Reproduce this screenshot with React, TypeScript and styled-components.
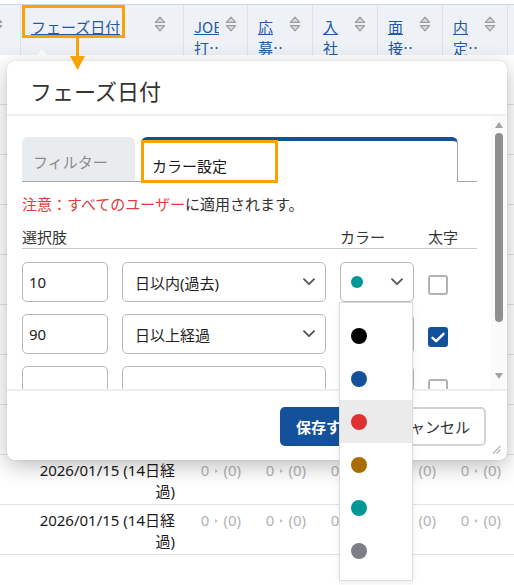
import React from 'react';
import styled, { createGlobalStyle } from 'styled-components';

const GlobalStyle = createGlobalStyle`
  html, body {
    margin: 0;
    padding: 0;
    background: #fff;
  }
  body {
    font-family: "Noto Sans", "Noto Sans CJK JP", sans-serif;
    color: #222;
    overflow: hidden;
  }
  * {
    box-sizing: border-box;
  }
`;

const COLS = '21px 163px 64px 65px 65px 65px 65px 1fr';
const BLUE = '#13529a';
const ORANGE = '#f8a300';

const Page = styled.div`
  position: relative;
  width: 514px;
  height: 585px;
  overflow: hidden;
  padding-top: 4px;
`;

const Table = styled.div`
  border-top: 1px solid #d3d6da;
`;

const HeadRow = styled.div`
  display: grid;
  grid-template-columns: ${COLS};
  height: 50px;
  background: #eef1f5;
`;

const HeadCell = styled.div<{ $wide?: boolean; $edge?: boolean }>`
  display: flex;
  align-items: flex-start;
  justify-content: ${p => (p.$edge ? 'flex-end' : p.$wide ? 'space-between' : 'flex-start')};
  gap: 6px;
  padding: 11px ${p => (p.$edge || p.$wide ? '17px' : '0')} 0 ${p => (p.$edge ? '0' : '10px')};
  border-right: 1px solid #dde1e6;
  overflow: hidden;
`;

const HeadLabel = styled.span<{ $w?: number }>`
  display: -webkit-box;
  -webkit-box-orient: vertical;
  -webkit-line-clamp: 2;
  overflow: hidden;
  flex: none;
  width: ${p => (p.$w ? `${p.$w}px` : 'auto')};
  font-family: "Noto Sans CJK JP", sans-serif;
  font-size: 15px;
  line-height: 21px;
  color: #1f5aa6;
  text-decoration: underline;
`;

const BodyRow = styled.div`
  display: grid;
  grid-template-columns: ${COLS};
  height: 50px;
  border-bottom: 1px solid #e2e2e2;
  font-size: 15px;
  line-height: 21px;
`;

const DateCell = styled.div`
  grid-column: 2;
  text-align: right;
  padding: 5px 9px 0 12px;
  color: #1a1a1a;
`;

const CountCell = styled.div`
  text-align: right;
  padding: 5px 7px 0 0;
  color: #b3b3b3;
  white-space: nowrap;
`;

const Pointer = styled.span`
  display: inline-block;
  width: 0;
  height: 0;
  margin: 0 5px 2px 6px;
  border-left: 3px solid #c4c4c4;
  border-top: 2.5px solid transparent;
  border-bottom: 2.5px solid transparent;
  vertical-align: middle;
`;

/* annotations laid over the page */
const HighlightBox = styled.div<{ $left: number; $top: number; $w: number; $h: number }>`
  position: absolute;
  left: ${p => p.$left}px;
  top: ${p => p.$top}px;
  width: ${p => p.$w}px;
  height: ${p => p.$h}px;
  border: 3px solid ${ORANGE};
  pointer-events: none;
  z-index: 5;
`;

const ArrowMark = styled.svg`
  position: absolute;
  left: 69px;
  top: 38px;
  z-index: 5;
`;

const Caret = styled.div`
  position: absolute;
  left: 37px;
  top: 49px;
  width: 0;
  height: 0;
  border-left: 5px solid transparent;
  border-right: 5px solid transparent;
  border-bottom: 6px solid #fff;
  z-index: 3;
`;

/* dialog */
const Dialog = styled.div`
  position: absolute;
  left: 7px;
  top: 61px;
  width: 500px;
  height: 399px;
  background: #fff;
  border-radius: 8px;
  box-shadow: 0 6px 22px rgba(0, 0, 0, 0.26), 0 0 2px rgba(0, 0, 0, 0.12);
  display: flex;
  flex-direction: column;
  z-index: 4;
`;

const DialogTitle = styled.div`
  padding: 14px 23px 9px;
  font-family: "Noto Sans CJK JP", sans-serif;
  font-size: 22px;
  line-height: 30px;
  color: #333;
  border-bottom: 2px solid #eeeeee;
`;

const DialogBody = styled.div`
  display: flex;
  height: 273px;
  flex: none;
`;

const Content = styled.div`
  flex: 1;
  padding: 21px 14px 0 15px;
  overflow: hidden;
  font-size: 15px;
`;

const ScrollTrack = styled.div`
  width: 16px;
  display: flex;
  flex-direction: column;
  align-items: center;
  padding: 6px 0 10px;
  background: #fafafa;
`;

const ScrollArrow = styled.div<{ $down?: boolean }>`
  width: 0;
  height: 0;
  border-left: 4.5px solid transparent;
  border-right: 4.5px solid transparent;
  ${p => (p.$down ? 'border-top: 6px solid #a3a3a3;' : 'border-bottom: 6px solid #a3a3a3;')}
  margin-top: ${p => (p.$down ? 'auto' : '0')};
`;

const ScrollThumb = styled.div`
  width: 8px;
  height: 189px;
  margin-top: 5px;
  border-radius: 4px;
  background: #8f8f8f;
`;

const TabBar = styled.div`
  display: flex;
  align-items: flex-end;
  gap: 6px;
  border-bottom: 1px solid #a6a6a6;
`;

const Tab = styled.div<{ $active?: boolean; $w: number }>`
  position: relative;
  width: ${p => p.$w}px;
  display: flex;
  align-items: center;
  font-family: "Noto Sans CJK JP", sans-serif;
  font-size: 15px;
  border-radius: 6px 6px 0 0;
  ${p =>
    p.$active
      ? `
    height: 45px;
    margin-bottom: -1px;
    padding: 8px 0 0 10px;
    background: #fff;
    color: #1a1a1a;
    border-top: 4px solid ${BLUE};
    border-left: 1px solid #a6a6a6;
    border-right: 1px solid #a6a6a6;
  `
      : `
    height: 44px;
    padding: 4px 0 0 11px;
    background: #e9ecef;
    color: #8a8a8a;
  `}
`;

const TabMark = styled.div`
  position: absolute;
  left: -1px;
  top: -1px;
  width: 137px;
  height: 43px;
  border: 3px solid ${ORANGE};
`;

const Notice = styled.p`
  margin: 11px 0 0;
  line-height: 22px;
  color: #333;
`;

const Warn = styled.span`
  color: #e03c3c;
`;

const OptionGrid = styled.div`
  display: grid;
  grid-template-columns: 86px 204px 74px 20px;
  column-gap: 14px;
`;

const OptionHead = styled(OptionGrid)`
  margin-top: 11px;
  line-height: 22px;
  color: #333;
  border-bottom: 1px solid #c8c8c8;
  white-space: nowrap;
`;

const HeadSpan = styled.div`
  grid-column: 1 / 3;
`;

const OptionRow = styled(OptionGrid)<{ $first?: boolean }>`
  height: 40px;
  margin-top: ${p => (p.$first ? 13 : 12)}px;
`;

const NumberInput = styled.input`
  width: 100%;
  height: 40px;
  border: 1px solid #b8b8b8;
  border-radius: 5px;
  padding: 0 6px;
  font-family: inherit;
  font-size: 15px;
  color: #222;
  background: #fff;
  outline: none;
`;

const SelectBox = styled.div<{ $pl: number }>`
  height: 40px;
  display: flex;
  align-items: center;
  justify-content: space-between;
  padding: 0 10px 0 ${p => p.$pl}px;
  border: 1px solid #b8b8b8;
  border-radius: 5px;
  background: #fff;
  color: #222;
  white-space: nowrap;
`;

const Dot = styled.span<{ $c: string; $size: number }>`
  display: inline-block;
  width: ${p => p.$size}px;
  height: ${p => p.$size}px;
  border-radius: 50%;
  background: ${p => p.$c};
`;

const CheckBox = styled.div<{ $on?: boolean }>`
  width: 20px;
  height: 20px;
  margin-top: 13px;
  border-radius: 3px;
  border: 2px solid ${p => (p.$on ? BLUE : '#b3b3b3')};
  background: ${p => (p.$on ? BLUE : '#fff')};
  display: flex;
  align-items: center;
  justify-content: center;
`;

const Footer = styled.div`
  flex: 1;
  display: flex;
  justify-content: flex-end;
  align-items: flex-start;
  gap: 7px;
  padding: 16px 21px 0 0;
  border-top: 2px solid #eeeeee;
  position: relative;
`;

const Button = styled.button<{ $primary?: boolean }>`
  height: 39px;
  padding: 0 ${p => (p.$primary ? 16 : 14)}px;
  border-radius: 5px;
  font-family: "Noto Sans CJK JP", sans-serif;
  font-size: 15px;
  font-weight: ${p => (p.$primary ? 700 : 400)};
  color: ${p => (p.$primary ? '#fff' : '#333')};
  background: ${p => (p.$primary ? BLUE : '#fff')};
  border: ${p => (p.$primary ? 'none' : '2px solid #d4d4d4')};
`;

const Grip = styled.svg`
  position: absolute;
  right: 6px;
  bottom: 6px;
`;

const ColorMenu = styled.ul`
  position: absolute;
  left: 332px;
  top: 241px;
  width: 74px;
  margin: 0;
  padding: 11px 0 8px;
  list-style: none;
  background: #fff;
  border: 1px solid #dcdcdc;
  box-shadow: 0 2px 6px rgba(0, 0, 0, 0.08);
  z-index: 6;
`;

const ColorItem = styled.li<{ $hover?: boolean }>`
  height: 43px;
  display: flex;
  align-items: center;
  padding-left: 11px;
  background: ${p => (p.$hover ? '#ebebeb' : 'transparent')};
`;

const SortIcon = () => (
  <svg width="12" height="16" viewBox="0 0 12 16" style={{ flex: 'none' }}>
    <path d="M6 1.2 L10.6 6.4 H1.4 Z" fill="#dadada" stroke="#9c9c9c" strokeWidth="1.2" strokeLinejoin="round" />
    <path d="M6 14.8 L10.6 9.6 H1.4 Z" fill="#dadada" stroke="#9c9c9c" strokeWidth="1.2" strokeLinejoin="round" />
  </svg>
);

const Chevron = () => (
  <svg width="12" height="8" viewBox="0 0 12 8">
    <path d="M1 1.2 L6 6.2 L11 1.2" fill="none" stroke="#555" strokeWidth="1.8" strokeLinecap="round" strokeLinejoin="round" />
  </svg>
);

const headers = ['JOB打刻', '応募日', '入社', '面接日', '内定日'];
const palette = ['#000000', '#13519a', '#e03131', '#a96c00', '#009797', '#7b7e86'];
const options = [
  { days: '10', rule: '日以内(過去)', bold: false },
  { days: '90', rule: '日以上経過', bold: true },
  { days: '', rule: '', bold: false },
];

export default function App() {
  return (
    <Page>
      <GlobalStyle />
      <Table>
        <HeadRow>
          <HeadCell $edge>
            <SortIcon />
          </HeadCell>
          <HeadCell $wide>
            <HeadLabel>フェーズ日付</HeadLabel>
            <SortIcon />
          </HeadCell>
          {headers.map(h => (
            <HeadCell key={h}>
              <HeadLabel $w={25}>{h}</HeadLabel>
              <SortIcon />
            </HeadCell>
          ))}
          <HeadCell />
        </HeadRow>
        {Array.from({ length: 10 }).map((_, i) => (
          <BodyRow key={i}>
            <DateCell>2026/01/15 (14日経過)</DateCell>
            {headers.map(h => (
              <CountCell key={h}>
                0<Pointer />(0)
              </CountCell>
            ))}
          </BodyRow>
        ))}
      </Table>

      <HighlightBox $left={22} $top={5} $w={103} $h={33} />
      <ArrowMark width="17" height="33" viewBox="0 0 17 33">
        <line x1="8.5" y1="0" x2="8.5" y2="19" stroke={ORANGE} strokeWidth="3" />
        <path d="M1 18 H16 L8.5 32 Z" fill={ORANGE} />
      </ArrowMark>
      <Caret />

      <Dialog>
        <DialogTitle>フェーズ日付</DialogTitle>
        <DialogBody>
          <Content>
            <TabBar>
              <Tab $w={113}>フィルター</Tab>
              <Tab $active $w={317}>
                カラー設定
                <TabMark />
              </Tab>
            </TabBar>
            <Notice>
              <Warn>注意：すべてのユーザー</Warn>に適用されます。
            </Notice>
            <OptionHead>
              <HeadSpan>選択肢</HeadSpan>
              <div>カラー</div>
              <div>太字</div>
            </OptionHead>
            {options.map((o, i) => (
              <OptionRow key={i} $first={i === 0}>
                <NumberInput defaultValue={o.days} />
                <SelectBox $pl={12}>
                  <span>{o.rule}</span>
                  {o.rule && <Chevron />}
                </SelectBox>
                <SelectBox $pl={10}>
                  {i === 0 ? <Dot $c="#009797" $size={12} /> : <span />}
                  <Chevron />
                </SelectBox>
                <CheckBox $on={o.bold}>
                  {o.bold && (
                    <svg width="14" height="11" viewBox="0 0 14 11">
                      <path d="M1.5 5.8 L5.2 9.2 L12.5 1.8" fill="none" stroke="#fff" strokeWidth="2.4" strokeLinecap="round" strokeLinejoin="round" />
                    </svg>
                  )}
                </CheckBox>
              </OptionRow>
            ))}
          </Content>
          <ScrollTrack>
            <ScrollArrow />
            <ScrollThumb />
            <ScrollArrow $down />
          </ScrollTrack>
        </DialogBody>
        <Footer>
          <Button $primary>保存する</Button>
          <Button>キャンセル</Button>
          <Grip width="10" height="10" viewBox="0 0 10 10">
            <path d="M2 9.5 L9.5 2 M5.5 9.5 L9.5 5.5" stroke="#b5b5b5" strokeWidth="1.2" />
          </Grip>
        </Footer>
        <ColorMenu>
          {palette.map((c, i) => (
            <ColorItem key={c} $hover={i === 2}>
              <Dot $c={c} $size={16} />
            </ColorItem>
          ))}
        </ColorMenu>
      </Dialog>
    </Page>
  );
}
